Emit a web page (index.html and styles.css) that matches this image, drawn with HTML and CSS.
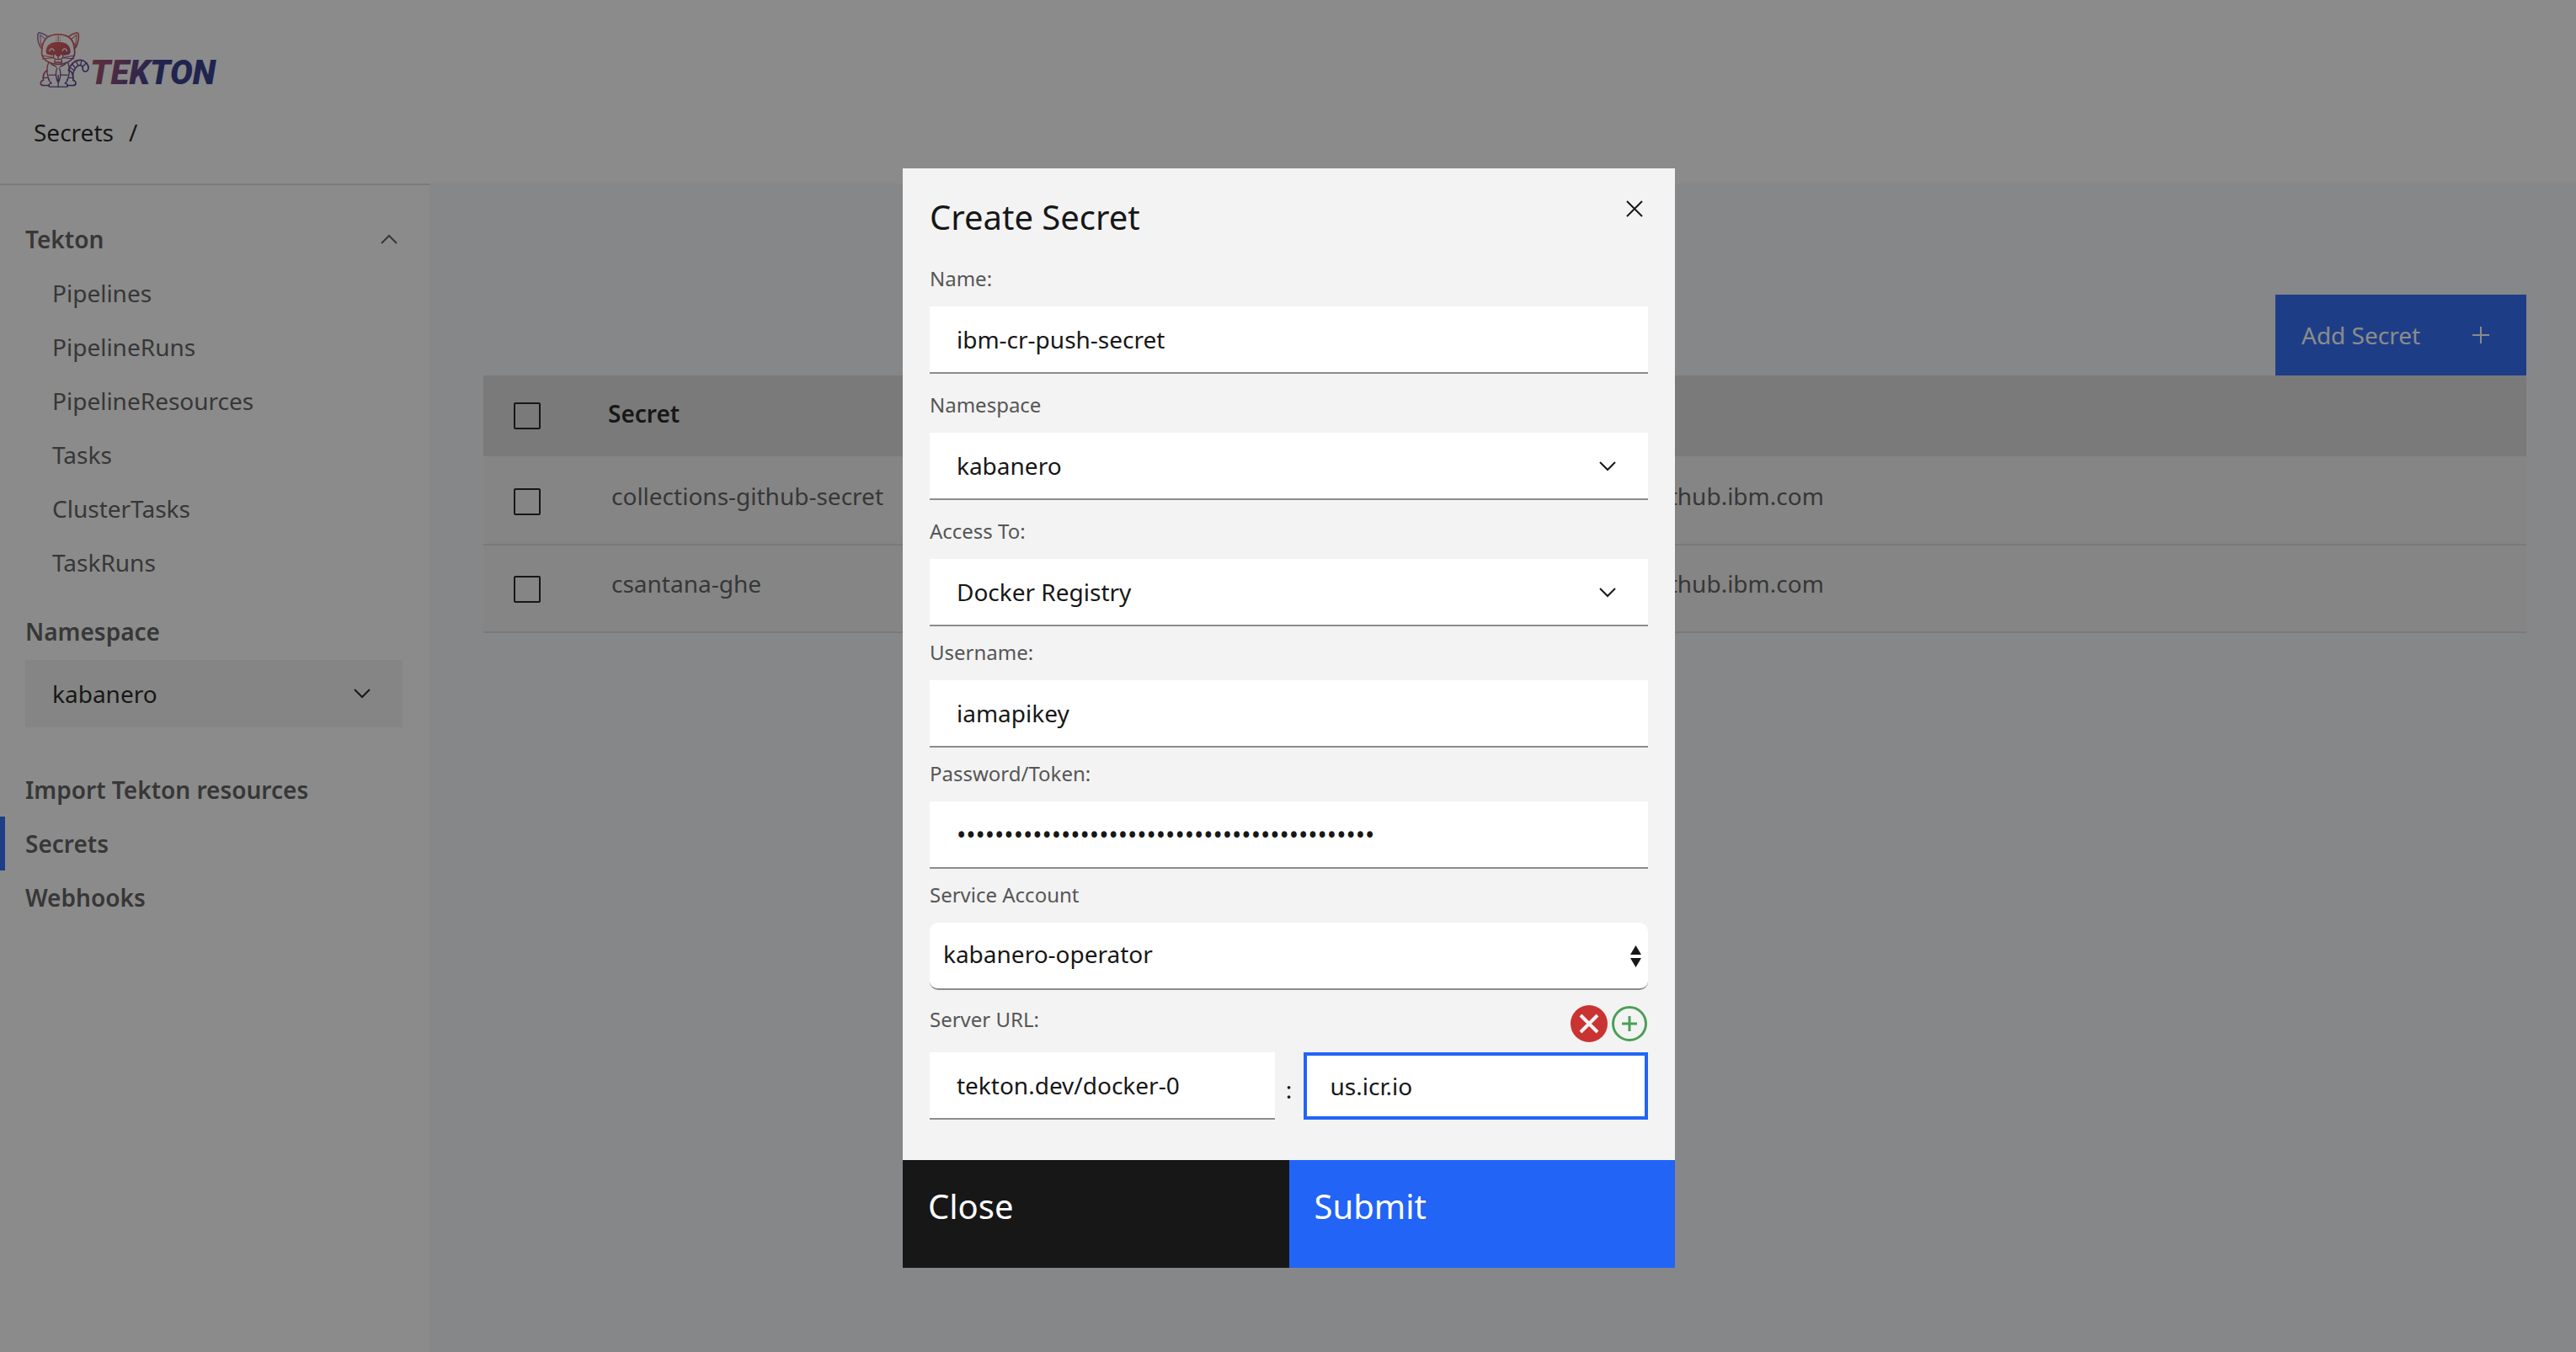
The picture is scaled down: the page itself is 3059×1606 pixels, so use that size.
FILE: index.html
```html
<!DOCTYPE html>
<html lang="en">
<head>
<meta charset="utf-8">
<title>Tekton Dashboard</title>
<link rel="stylesheet" href="styles.css">
</head>
<body>
<header class="page-header">
  <a class="logo" href="#" aria-label="Tekton home">
    <svg class="logo-cat" viewBox="42 34 185 198" aria-hidden="true">
      <defs>
        <linearGradient id="cat" gradientUnits="userSpaceOnUse" x1="50" y1="50" x2="190" y2="220">
          <stop offset="0" stop-color="#8d6db0"/>
          <stop offset=".16" stop-color="#e05659"/>
          <stop offset=".45" stop-color="#bf4853"/>
          <stop offset=".68" stop-color="#6f3c80"/>
          <stop offset="1" stop-color="#293590"/>
        </linearGradient>
      </defs>
      <g fill="none" stroke="url(#cat)" stroke-width="5" stroke-linecap="round" stroke-linejoin="round">
        <path d="M59 97C47 84 41 57 46 43c1-3 5-3 8-2 10 2 19 7 26 13M175 97c12-13 16-40 13-54-1-3-5-3-8-2-10 2-19 7-26 13"/>
        <path d="M52 48l5 38 15-23zM182 48l-4 38-15-23z" stroke-width="3"/>
        <path d="M117 46c35 0 52 17 56 42 3 16 5 29-1 37-9 15-28 27-55 27s-46-12-55-27c-6-8-4-21-1-37 4-25 21-42 56-42z"/>
        <path d="M117 52v18M110 57v1M124 57v1M110 66v1M124 66v1" stroke-width="3"/>
        <path d="M60 121l38 7M60 133l38-4M174 121l-38 7M174 133l-38-4" stroke-width="3"/>
        <path d="M76 105c2-20 18-30 41-30s39 10 41 30c0 8-5 12-13 12l-14 1H103l-14-1c-8 0-13-4-13-12z" fill="url(#cat)"/>
        <path d="M86 105c3-11 13-11 16-1M132 104c3-10 13-10 16 1" stroke="#fff" stroke-width="4"/>
        <path d="M117 112c12 0 17 5 17 12s-5 11-17 11-17-4-17-11 5-12 17-12z" fill="#fff" stroke-width="4"/>
        <path d="M108 115h18c2 4-5 9-9 9s-11-5-9-9z" fill="url(#cat)" stroke-width="2"/>
        <path d="M117 124v8M105 137l-1 8h26l-1-8" stroke-width="4"/>
        <path d="M83 146c-5 12-7 29-4 43l5 19M151 146c5 12 7 29 4 43l-5 19M92 151c7 8 15 4 18 10M142 151c-7 8-15 4-18 10" stroke-width="4"/>
        <path d="M78 174c-11 5-16 17-14 35-7 1-10 5-9 13 1 4 5 5 10 5h20M156 174c11 5 16 17 14 35 7 1 10 5 9 13-1 4-5 5-10 5h-20"/>
        <path d="M113 166c-6 12-5 30 2 48M121 166c6 12 5 30-2 48M117 190v42" stroke-width="4"/>
        <path d="M84 190h24M126 190h24M85 205c-2 10 5 8 8 15-11 0-12 11-6 12h60c6-1 5-12-6-12 3-7 10-5 8-15M64 200h15M170 200h-15" stroke-width="4"/>
        <path d="M153 174c8-22 23-38 45-37 16 2 27 17 26 30-2 11-12 13-18 8-4-5-1-12-4-16-7-8-17-2-24 7-5 7-8 13-10 24"/>
        <path d="M166 151l10 12M180 141l7 14M200 138l-4 17M217 147l-13 13M158 163l13 9" stroke-width="4"/>
      </g>
    </svg>
    <svg class="logo-word" viewBox="0 0 150 68" aria-hidden="true">
      <defs>
        <linearGradient id="word" gradientUnits="userSpaceOnUse" x1="0" y1="30" x2="90" y2="76">
          <stop offset="0" stop-color="#a8485a"/>
          <stop offset=".3" stop-color="#84406f"/>
          <stop offset=".8" stop-color="#293085"/>
        </linearGradient>
      </defs>
      <text x="0" y="64" class="logo-text" fill="url(#word)">TEKTON</text>
    </svg>
  </a>
  <nav class="breadcrumb" aria-label="Breadcrumb">
    <a href="#">Secrets</a><span>/</span>
  </nav>
</header>

<div class="page-body">
  <aside class="side-nav">
    <nav>
      <button class="nav-item nav-strong nav-toggle" type="button" aria-expanded="true">Tekton
        <svg class="icon" viewBox="0 0 20 12" aria-hidden="true"><path d="M1 11l9-9 9 9"/></svg>
      </button>
      <ul class="nav-list nav-sub">
        <li><a class="nav-item" href="#">Pipelines</a></li>
        <li><a class="nav-item" href="#">PipelineRuns</a></li>
        <li><a class="nav-item" href="#">PipelineResources</a></li>
        <li><a class="nav-item" href="#">Tasks</a></li>
        <li><a class="nav-item" href="#">ClusterTasks</a></li>
        <li><a class="nav-item" href="#">TaskRuns</a></li>
      </ul>
      <div class="nav-namespace">
        <label class="nav-label" for="nav-ns">Namespace</label>
        <div class="select select-side">
          <select id="nav-ns" class="field"><option>kabanero</option></select>
          <svg class="icon" viewBox="0 0 20 12" aria-hidden="true"><path d="M1 1l9 9 9-9"/></svg>
        </div>
      </div>
      <ul class="nav-list">
        <li><a class="nav-item nav-strong" href="#">Import Tekton resources</a></li>
        <li><a class="nav-item nav-strong nav-current" href="#" aria-current="page">Secrets</a></li>
        <li><a class="nav-item nav-strong" href="#">Webhooks</a></li>
      </ul>
    </nav>
  </aside>

  <main class="content">
    <div class="toolbar">
      <button class="add-button" type="button">Add Secret
        <svg class="plus" viewBox="0 0 20 20" aria-hidden="true"><path d="M10 0v20M0 10h20"/></svg>
      </button>
    </div>
    <table class="secrets">
      <colgroup><col class="col-check"><col class="col-secret"><col></colgroup>
      <thead>
        <tr><th class="check-cell"><input type="checkbox" aria-label="Select all rows"></th><th>Secret</th><th></th></tr>
      </thead>
      <tbody>
        <tr><td class="check-cell"><input type="checkbox" aria-label="Select collections-github-secret"></td><td class="name-cell">collections-github-secret</td><td>github.ibm.com</td></tr>
        <tr><td class="check-cell"><input type="checkbox" aria-label="Select csantana-ghe"></td><td class="name-cell">csantana-ghe</td><td>github.ibm.com</td></tr>
      </tbody>
    </table>
  </main>
</div>

<div class="overlay">
  <form class="modal" role="dialog" aria-labelledby="modal-title" onsubmit="return false">
    <div class="modal-body">
      <div class="modal-header">
        <h2 id="modal-title">Create Secret</h2>
        <button class="close-icon" type="button" aria-label="Close dialog">
          <svg viewBox="0 0 20 20" aria-hidden="true"><path d="M1 1l18 18M19 1L1 19"/></svg>
        </button>
      </div>
      <div class="group group-first">
        <label for="name">Name:</label>
        <input id="name" class="field" type="text" value="ibm-cr-push-secret">
      </div>
      <div class="group group-wide">
        <label for="namespace">Namespace</label>
        <div class="select">
          <select id="namespace" class="field"><option>kabanero</option></select>
          <svg class="icon" viewBox="0 0 20 12" aria-hidden="true"><path d="M1 1l9 9 9-9"/></svg>
        </div>
      </div>
      <div class="group group-wide">
        <label for="access">Access To:</label>
        <div class="select">
          <select id="access" class="field"><option>Docker Registry</option></select>
          <svg class="icon" viewBox="0 0 20 12" aria-hidden="true"><path d="M1 1l9 9 9-9"/></svg>
        </div>
      </div>
      <div class="group">
        <label for="username">Username:</label>
        <input id="username" class="field" type="text" value="iamapikey">
      </div>
      <div class="group">
        <label for="password">Password/Token:</label>
        <input id="password" class="field field-password" type="password" value="abcdefghijklmnopqrstuvwxyzabcdefghijklmnopqr">
      </div>
      <div class="group">
        <label for="account">Service Account</label>
        <div class="select select-native">
          <select id="account" class="field"><option>kabanero-operator</option></select>
          <svg class="arrows" viewBox="0 0 13 26" aria-hidden="true"><path d="M6.500 0L13 11H0zM6.500 26L0 15h13z"/></svg>
        </div>
      </div>
      <div class="server-head">
        <label for="server-key">Server URL:</label>
        <div class="server-actions">
          <button type="button" aria-label="Remove server URL">
            <svg viewBox="0 0 44 44" aria-hidden="true"><circle cx="22" cy="22" r="22" fill="#c93432"/><path d="M12 12l20 20M32 12L12 32" fill="none" stroke="#f3f3f3" stroke-width="4"/></svg>
          </button>
          <button type="button" aria-label="Add server URL">
            <svg viewBox="0 0 44 44" aria-hidden="true"><g fill="none" stroke="#4b9f56" stroke-width="3"><circle cx="22" cy="22" r="19.500"/><path d="M22 13v18M13 22h18"/></g></svg>
          </button>
        </div>
      </div>
      <div class="server-fields">
        <input id="server-key" class="field" type="text" value="tekton.dev/docker-0">
        <span class="colon">:</span>
        <input class="field field-focus" type="text" value="us.icr.io" aria-label="Server URL value">
      </div>
    </div>
    <div class="modal-footer">
      <button class="btn-close" type="button">Close</button>
      <button class="btn-submit" type="submit">Submit</button>
    </div>
  </form>
</div>
</body>
</html>
```

FILE: styles.css
```css
:root {
  --ink: #171717;
  --muted: #565656;
  --surface: #f3f3f3;
  --line: #dcdcdc;
  --blue: #2264f6;
}

* { box-sizing: border-box; }

body {
  margin: 0;
  min-height: 100vh;
  display: flex;
  flex-direction: column;
  background: #fff;
  color: var(--ink);
  font: 28px/36px "Noto Sans", "Open Sans", sans-serif;
}

button, input, select { font: inherit; color: inherit; border: 0; border-radius: 0; margin: 0; }
button { padding: 0; background: none; text-align: left; cursor: pointer; }
a { color: inherit; text-decoration: none; }
svg { display: block; }

/* Header */
.page-header { padding: 36px 40px 43px; }
.logo { display: flex; gap: 1px; margin: 0 0 35px 4px; }
.logo-cat { width: 62px; height: 68px; }
.logo-word { width: 150px; height: 68px; overflow: visible; }
.logo-text { font: italic 900 40px Roboto, "Liberation Sans", sans-serif; }
.breadcrumb { display: flex; gap: 18px; }

/* Side navigation */
.page-body { flex: 1; display: flex; }
.side-nav {
  flex: none;
  width: 510px;
  padding-top: 32px;
  border-top: 2px solid var(--line);
  background: #fff;
  color: var(--muted);
}
.nav-list { list-style: none; margin: 0; padding: 0; }
.nav-item {
  display: flex;
  align-items: center;
  width: 100%;
  height: 64px;
  padding-left: 24px;
  border-left: 6px solid transparent;
}
.nav-sub .nav-item { padding-left: 56px; }
.nav-strong { font-weight: 600; }
.nav-toggle { justify-content: space-between; padding-right: 38px; }
.nav-current { border-left-color: var(--blue); }
.nav-namespace { padding: 32px 32px 42px 30px; }
.nav-label { display: block; margin-bottom: 16px; font-weight: 600; }

.icon { width: 20px; height: 12px; fill: none; stroke: currentColor; stroke-width: 2; }

/* Secrets table */
.content { flex: 1; padding: 132px 59px 0 64px; background: #f4f7fb; }
.toolbar { display: flex; justify-content: flex-end; }
.add-button {
  display: flex;
  align-items: center;
  justify-content: space-between;
  width: 298px;
  height: 96px;
  padding: 0 44px 0 31px;
  background: var(--blue);
  color: #fff;
}
.plus { width: 20px; height: 20px; stroke: currentColor; stroke-width: 2; }
.secrets { width: 100%; table-layout: fixed; border-spacing: 0; background: var(--surface); }
.col-check { width: 146px; }
.col-secret { width: 51%; }
.secrets th, .secrets td { padding: 27px 0 0; text-align: left; vertical-align: top; }
.secrets th { height: 98px; padding-left: 2px; background: var(--line) padding-box; border-bottom: 2px solid var(--surface); font-weight: 600; }
.secrets td { height: 104px; border-bottom: 2px solid var(--line); color: var(--muted); }
.secrets .name-cell { padding-left: 6px; }
.secrets .check-cell { padding: 36px 0 0 36px; }
.secrets th.check-cell { padding-top: 32px; }
.secrets input {
  display: block;
  appearance: none;
  width: 32px;
  height: 32px;
  border: 2px solid var(--ink);
  border-radius: 2px;
}

/* Modal */
.overlay {
  position: fixed;
  inset: 0;
  display: flex;
  justify-content: center;
  align-items: flex-start;
  padding: 200px 0 0 2px;
  background: rgba(23, 23, 23, .5);
}
.modal { width: 30%; background: var(--surface); }
.modal-body { padding: 32px 32px 48px; }
.modal-header { display: flex; justify-content: space-between; align-items: flex-start; }
.modal-header h2 { margin: 0; font-size: 40px; line-height: 52px; font-weight: 400; }
.close-icon { padding: 6px; }
.close-icon svg { width: 20px; height: 20px; stroke: currentColor; stroke-width: 2; }

.group { margin-top: 16px; }
.group-wide { margin-top: 22px; }
.group-first { margin-top: 32px; }
.modal label { display: block; font-size: 24px; line-height: 30px; color: var(--muted); }
.group label { margin-bottom: 18px; }

.field {
  appearance: none;
  display: block;
  width: 100%;
  min-width: 0;
  height: 80px;
  padding: 0 32px;
  background: #fff;
  border-bottom: 2px solid #8c8c8c;
  color: var(--ink);
  outline: 0;
}
.field-password { font-size: 30px; }
.field-focus { border: 4px solid var(--blue); padding: 0 28px; }

.select { display: grid; align-items: center; }
.select > * { grid-area: 1 / 1; }
.select svg { justify-self: end; margin-right: 38px; color: var(--ink); pointer-events: none; }
.select-side .field { background: var(--surface); border-bottom: 0; }
.select-native .field { padding: 0 16px 4px; border-radius: 10px; }
.select-native .arrows { width: 13px; height: 26px; margin-right: 8px; fill: var(--ink); }

.server-head { display: flex; justify-content: space-between; align-items: flex-start; margin: 18px 0 12px; }
.server-head label { padding-top: 2px; }
.server-actions { display: flex; gap: 4px; }
.server-actions svg { width: 44px; height: 44px; }
.server-fields { display: grid; grid-template-columns: 1fr 34px 1fr; align-items: center; }
.colon { padding-top: 8px; text-align: center; }

.modal-footer { display: grid; grid-template-columns: 1fr 1fr; color: #fff; }
.modal-footer button { height: 128px; padding: 0 30px 18px; font-size: 40px; line-height: 52px; }
.btn-close { background: var(--ink); }
.btn-submit { background: var(--blue); }
```
